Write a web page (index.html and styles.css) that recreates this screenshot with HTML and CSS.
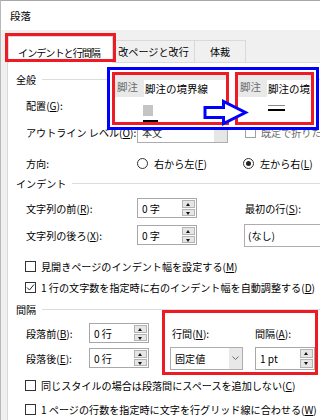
FILE: index.html
```html
<!DOCTYPE html>
<html lang="ja">
<head>
  <meta charset="UTF-8" />
  <title>段落</title>
  <link rel="stylesheet" href="styles.css">
</head>
<body>
  <div class="window">
    <div class="titlebar">段落</div>

    <div class="tabstrip">
      <div class="tab active"><span>インデントと行間隔</span></div>
      <div class="tab tab-break">改ページと改行</div>
      <div class="tab tab-layout">体裁</div>
    </div>

    <div class="page">
      <div class="group r-general"><span>全般</span></div>

      <div class="row r-align">
        <span class="label">配置(<u>G</u>):</span>
        <div class="select sel-align"><span>両端揃え</span><i class="drop"></i></div>
      </div>

      <div class="row r-outline">
        <span class="label">アウトライン レベル(<u>O</u>):</span>
        <div class="select sel-outline"><span>本文</span><i class="drop"></i></div>
        <span class="check disabled"><i class="box"></i>既定で折りたたみ</span>
      </div>

      <div class="row r-dir">
        <span class="label">方向:</span>
        <span class="radio radio-rtl"><i class="circle"></i>右から左(<u>F</u>)</span>
        <span class="radio on"><i class="circle"></i>左から右(<u>L</u>)</span>
      </div>

      <div class="group r-indent"><span>インデント</span></div>

      <div class="row r-before">
        <span class="label">文字列の前(<u>R</u>):</span>
        <div class="spin"><span>0 字</span><i class="spin-btns"><b class="up"></b><b class="down"></b></i></div>
        <span class="first-label">最初の行(<u>S</u>):</span>
      </div>

      <div class="row r-after">
        <span class="label">文字列の後ろ(<u>X</u>):</span>
        <div class="spin"><span>0 字</span><i class="spin-btns"><b class="up"></b><b class="down"></b></i></div>
        <div class="select sel-first"><span>(なし)</span></div>
      </div>

      <div class="checkrow r-mirror">
        <span class="check"><i class="box"></i>見開きページのインデント幅を設定する(<u>M</u>)</span>
      </div>
      <div class="checkrow r-auto">
        <span class="check on"><i class="box"><svg viewBox="0 0 9 9" width="9" height="9"><polyline points="1,4.5 3.5,7 8,1.5" fill="none" stroke="#222" stroke-width="1"/></svg></i>1 行の文字数を指定時に右のインデント幅を自動調整する(<u>D</u>)</span>
      </div>

      <div class="group r-spacing"><span>間隔</span></div>

      <div class="spacing">
        <span class="label">段落前(<u>B</u>):</span>
        <div class="spin"><span>0 行</span><i class="spin-btns"><b class="up"></b><b class="down"></b></i></div>
        <span></span>
        <span class="sub-label">行間(<u>N</u>):</span>
        <span></span>
        <span class="label">間隔(<u>A</u>):</span>

        <span class="label">段落後(<u>E</u>):</span>
        <div class="spin"><span>0 行</span><i class="spin-btns"><b class="up"></b><b class="down"></b></i></div>
        <span></span>
        <div class="select sel-line"><span>固定値</span><i class="drop chevron"><svg viewBox="0 0 7 4" width="7" height="4"><polyline points="0.5,0.5 3.5,3.5 6.5,0.5" fill="none" stroke="#6a6a6a" stroke-width="1"/></svg></i></div>
        <span></span>
        <div class="spin spin-pt"><span>1 pt</span><i class="spin-btns"><b class="up"></b><b class="down"></b></i></div>

        <div class="mark-frame"></div>
      </div>

      <div class="checkrow r-same">
        <span class="check"><i class="box"></i>同じスタイルの場合は段落間にスペースを追加しない(<u>C</u>)</span>
      </div>
      <div class="checkrow r-grid">
        <span class="check"><i class="box"></i>1 ページの行数を指定時に文字を行グリッド線に合わせる(<u>W</u>)</span>
      </div>
    </div>

    <!-- 注釈: 脚注の境界線の変化 -->
    <div class="callout">
      <div class="shot shot-before">
        <div class="ribbon"><span class="rb-tab">脚注</span><span class="rb-field">脚注の境界線</span></div>
        <div class="rb-body">
          <i class="rb-icon"></i>
          <i class="rb-line"></i>
        </div>
      </div>
      <div class="shot shot-after">
        <div class="ribbon"><span class="rb-tab">脚注</span><span class="rb-field">脚注の境界線</span></div>
        <div class="rb-body">
          <i class="rb-rule"></i>
        </div>
      </div>
    </div>
    <svg class="arrow" width="46" height="28" viewBox="0 0 46 28">
      <polygon points="2,8.5 20.5,8.5 20.5,2.5 42.5,13.5 20.5,24.5 20.5,18.5 2,18.5" fill="#fff" stroke="#0000ff" stroke-width="3"/>
    </svg>
  </div>
</body>
</html>
```

FILE: styles.css
```css
* {
  box-sizing: border-box;
}
body {
  margin: 0;
  background: #fff;
  font-family: "Noto Sans CJK JP", "Noto Sans", sans-serif;
  font-size: 10.1px;
  color: #000;
}
u {
  text-decoration-thickness: 1px;
  text-underline-offset: 1px;
}
i {
  font-style: normal;
}

.window {
  position: relative;
  width: 320px;
  height: 420px;
  overflow: hidden;
  background: #f0f0f0;
  border-top: 1px solid #a8a8a8;
  border-left: 1px solid #b8b8b8;
}
.titlebar {
  height: 29px;
  line-height: 29px;
  padding-left: 9px;
  background: #fff;
  font-size: 10.5px;
}

/* Tabs */
.tabstrip {
  height: 32px;
  display: flex;
  align-items: flex-end;
  padding-left: 7px;
}
.tab {
  height: 22px;
  display: flex;
  align-items: center;
  justify-content: center;
  border-top: 1px solid #d9d9d9;
  border-right: 1px solid #d9d9d9;
  white-space: nowrap;
}
.tab.active {
  position: relative;
  z-index: 1;
  width: 105px;
  height: 27px;
  margin-bottom: -1px;
  padding-top: 4px;
  padding-right: 3px;
  background: #fff;
  border-left: 1px solid #d9d9d9;
  letter-spacing: -1px;
}
.tab.active::after {
  content: "";
  position: absolute;
  left: -4px;
  right: -4px;
  top: -4px;
  bottom: 1px;
  border: 3px solid #ed1c24;
}
.tab-break {
  width: 82px;
}
.tab-layout {
  width: 51px;
}

/* Page */
.page {
  height: 400px;
  margin-left: 6px;
  background: #fff;
  border-top: 1px solid #d9d9d9;
  border-left: 1px solid #d9d9d9;
}
.group {
  height: 20px;
  display: flex;
  align-items: center;
  padding-left: 8px;
}
.group::after {
  content: "";
  flex: 1;
  height: 1px;
  margin-left: 6px;
  background: #dcdcdc;
}
.row {
  height: 20px;
  display: flex;
  align-items: center;
  padding-left: 18px;
  white-space: nowrap;
}
.label {
  flex: none;
  width: 111px;
  white-space: nowrap;
}
.checkrow {
  height: 20px;
  display: flex;
  align-items: center;
  padding-left: 17px;
  white-space: nowrap;
}

.r-general { margin-top: 6px; }
.r-align { margin-top: 6px; }
.r-outline { margin-top: 6px; height: 22px; }
.r-dir { margin-top: 10px; }
.r-before { margin-top: 5px; }
.r-after { margin-top: 7px; }
.r-mirror { margin-top: 11px; }
.r-auto { margin-top: 1px; }
.r-spacing { margin-top: 2px; }
.r-same { margin-top: 7px; }
.r-grid { margin-top: 4px; }

/* Controls */
.select {
  flex: none;
  position: relative;
  display: flex;
  align-items: center;
  height: 22px;
  padding-left: 4px;
  border: 1px solid #adadad;
  background: #fff;
}
.select .drop {
  position: absolute;
  top: 0;
  right: 0;
  bottom: 0;
  width: 13px;
  display: flex;
  align-items: center;
  justify-content: center;
  background: #e6e6e6;
}
.sel-align {
  width: 96px;
}
.sel-outline {
  width: 91px;
  color: #333;
}
.sel-first {
  width: 90px;
  height: 23px;
  margin-left: 47px;
  padding-left: 3px;
}
.sel-line {
  width: 73px;
  height: 23px;
}
.sel-line .drop {
  width: 13px;
  background: #e8e8e8;
}

.spin {
  flex: none;
  position: relative;
  display: flex;
  align-items: center;
  width: 60px;
  height: 20px;
  padding-left: 4px;
  border: 1px solid #a8a8a8;
  background: #fff;
}
.spin-btns {
  position: absolute;
  top: 1px;
  right: 1px;
  bottom: 1px;
  width: 13px;
  display: flex;
  flex-direction: column;
  gap: 1px;
}
.spin-btns b {
  flex: 1;
  position: relative;
  background: #e6e6e6;
  border: 1px solid #b4b4b4;
}
.spin-btns b::after {
  content: "";
  position: absolute;
  left: 3px;
  top: 2px;
  border-left: 2.5px solid transparent;
  border-right: 2.5px solid transparent;
}
.spin-btns .up::after {
  border-bottom: 3px solid #111;
}
.spin-btns .down::after {
  border-top: 3px solid #111;
}
.spin-pt {
  height: 23px;
}

.first-label {
  margin-left: 48px;
}

.check,
.radio {
  display: flex;
  align-items: center;
  white-space: nowrap;
}
.check .box {
  flex: none;
  width: 11px;
  height: 11px;
  margin-right: 5px;
  border: 1px solid #333;
  background: #fff;
  display: flex;
  align-items: center;
  justify-content: center;
}
.check.disabled {
  margin-left: 17px;
  color: #6d6d6d;
}
.check.disabled .box {
  border-color: #a0a0a0;
}
.radio .circle {
  flex: none;
  position: relative;
  width: 11px;
  height: 11px;
  margin-right: 6px;
  border: 1px solid #333;
  border-radius: 50%;
  background: #fff;
}
.radio.on .circle::after {
  content: "";
  position: absolute;
  left: 2px;
  top: 2px;
  width: 5px;
  height: 5px;
  border-radius: 50%;
  background: #222;
}
.radio-rtl {
  width: 106px;
}

/* 間隔 */
.spacing {
  position: relative;
  margin-top: 4px;
  padding-left: 18px;
  display: grid;
  grid-template-columns: 63px 60px 21px 73px 12px 60px;
  grid-template-rows: 20px 20px;
  row-gap: 5px;
  align-items: center;
  white-space: nowrap;
}
.spacing .label {
  width: auto;
}
.sub-label {
  padding-left: 2px;
}
.mark-frame {
  position: absolute;
  left: 154px;
  top: -13px;
  width: 156px;
  height: 65px;
  border: 3px solid #ed1c24;
}

/* Callout overlay */
.callout {
  position: absolute;
  left: 106px;
  top: 66px;
  width: 212px;
  height: 63px;
  padding: 2px;
  display: flex;
  gap: 6px;
  background: #fff;
  border: 3px solid #0000ff;
}
.shot {
  height: 100%;
  overflow: hidden;
  border: 3px solid #ed1c24;
  background: #fff;
}
.shot-before {
  width: 117px;
}
.shot-after {
  flex: 1;
}
.ribbon {
  height: 22px;
  display: flex;
  align-items: flex-end;
  background: #e9e9e9;
  white-space: nowrap;
  font-size: 10.5px;
}
.rb-tab {
  flex: none;
  width: 29px;
  height: 100%;
  padding-left: 2px;
  display: flex;
  align-items: center;
  color: #6a6a6a;
}
.rb-field {
  height: 17px;
  padding-left: 1px;
  display: flex;
  align-items: center;
  background: #fff;
  flex: 1;
}
.rb-body {
  padding-top: 8px;
}
.rb-icon {
  display: block;
  width: 10px;
  height: 11px;
  margin-left: 28px;
  background: #c4c4c4;
}
.rb-line {
  display: block;
  width: 15px;
  height: 2px;
  margin-top: 4px;
  margin-left: 28px;
  background: #000;
}
.rb-rule {
  display: block;
  width: 17px;
  height: 6px;
  margin-left: 30px;
  border-top: 1px solid #8a8a8a;
  border-bottom: 2px solid #000;
}
.arrow {
  position: absolute;
  left: 202px;
  top: 98px;
}
```
